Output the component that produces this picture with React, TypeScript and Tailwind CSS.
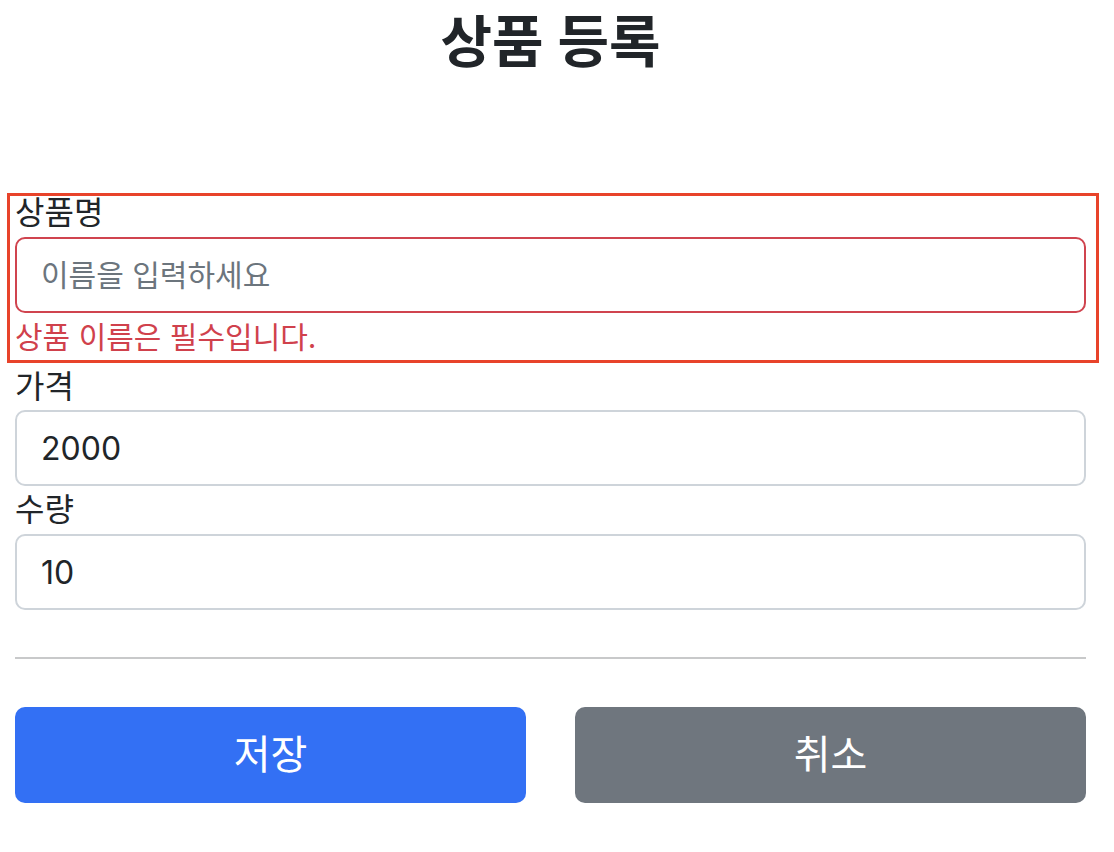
import React from "react";

export default function App() {
  const font = "font-['Inter','Noto_Sans_CJK_KR',sans-serif]";
  return (
    <div className={`relative w-[1114px] h-[852px] bg-white overflow-hidden text-[#212529] ${font}`}>
      <div className="pl-[15px] pr-[28px]">
        <div className="h-[189px] pt-[7px]">
          <h2 className="text-center text-[56px] leading-[70px] font-semibold">상품 등록</h2>
        </div>
        <div className="flex flex-col">
          <label className="block text-[32px] leading-[48px]">상품명</label>
          <input
            readOnly
            placeholder="이름을 입력하세요"
            className="h-[76px] w-full rounded-[10px] border-2 border-[#d0444f] bg-white px-[24px] text-[30px] outline-none placeholder:text-[#6c757d]"
          />
          <div className="mt-[3px] mb-[5px] text-[30px] leading-[42px] text-[#d0414c]">상품 이름은 필수입니다.</div>
          <label className="block text-[32px] leading-[47px]">가격</label>
          <input
            readOnly
            value="2000"
            className="h-[76px] w-full rounded-[10px] border-2 border-[#ced4da] bg-white px-[24px] text-[32px] text-[#212529] outline-none"
          />
          <label className="block text-[32px] leading-[48px]">수량</label>
          <input
            readOnly
            value="10"
            className="h-[76px] w-full rounded-[10px] border-2 border-[#ced4da] bg-white px-[24px] text-[32px] text-[#212529] outline-none"
          />
        </div>
        <div className="mt-[47px] h-[2px] bg-[#c8c9ca]" />
        <div className="mt-[48px] grid grid-cols-2 gap-[49px]">
          <button className="h-[96px] rounded-[10px] bg-[#3370f4] text-[40px] text-white">저장</button>
          <button className="h-[96px] rounded-[10px] bg-[#6f767e] text-[40px] text-white">취소</button>
        </div>
      </div>
      <div className="pointer-events-none absolute left-[7px] top-[193px] h-[170px] w-[1092px] border-[3px] border-[#e8432a]" />
    </div>
  );
}
